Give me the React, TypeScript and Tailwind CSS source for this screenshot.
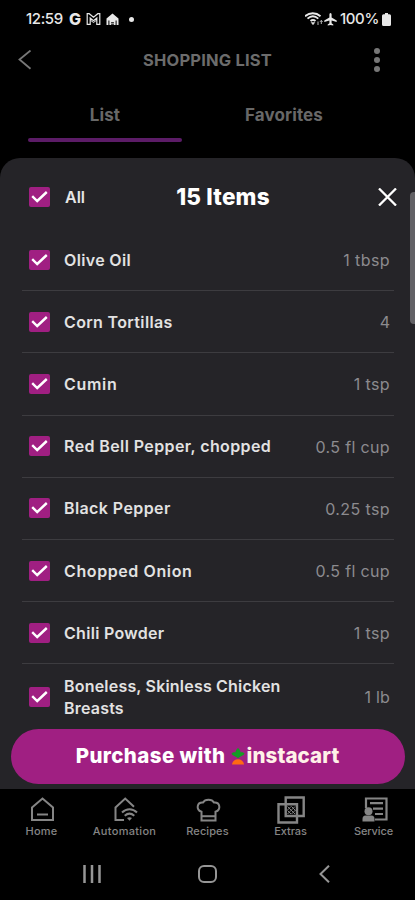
import { useState } from 'react'

interface Item {
  name: string;
  amount: string;
  nameClass: string;
  amountClass: string;
}

const ITEMS: Item[] = [
  { name: 'Olive Oil', amount: '1 tbsp', nameClass: 'tracking-[0.35px]', amountClass: 'tracking-[0.4px]' },
  { name: 'Corn Tortillas', amount: '4', nameClass: 'tracking-[0.35px]', amountClass: 'tracking-[0px]' },
  { name: 'Cumin', amount: '1 tsp', nameClass: 'tracking-[0.7px]', amountClass: 'tracking-[0.4px]' },
  { name: 'Red Bell Pepper, chopped', amount: '0.5 fl cup', nameClass: 'tracking-[0.4px]', amountClass: 'tracking-[0.35px]' },
  { name: 'Black Pepper', amount: '0.25 tsp', nameClass: 'tracking-[0.4px]', amountClass: 'tracking-[0.4px]' },
  { name: 'Chopped Onion', amount: '0.5 fl cup', nameClass: 'tracking-[0.6px]', amountClass: 'tracking-[0.35px]' },
  { name: 'Chili Powder', amount: '1 tsp', nameClass: 'tracking-[0.3px]', amountClass: 'tracking-[0.4px]' },
  { name: 'Boneless, Skinless Chicken Breasts', amount: '1 lb', nameClass: 'tracking-[0.2px]', amountClass: 'tracking-[0.2px]' },
]

function Checkbox({ checked, onClick }: { checked: boolean; onClick: () => void }) {
  return (
    <button onClick={onClick} className="flex h-[20px] w-[21px] shrink-0 items-center justify-center rounded-[2px] bg-[#a01f82]">
      {checked && (
        <svg width="17" height="14" viewBox="0 0 17 14" fill="none" stroke="#fff" strokeWidth="2.4">
          <path d="M1.2 6.2 6.2 11 15.8 2" />
        </svg>
      )}
    </button>
  )
}

function StatusBar() {
  return (
    <div className="flex h-[38px] items-center justify-between pl-[26px] pr-[24px] text-[#e8e8e8]">
      <div className="flex items-center">
        <span className="w-[38px] whitespace-nowrap text-[15px] font-medium tracking-[-0.4px]">12:59</span>
        <span className="ml-[5px] w-[13px] text-[16px] font-extrabold leading-none">G</span>
        <svg className="ml-[4px]" width="15" height="12" viewBox="0 0 15 12" fill="none" stroke="currentColor">
          <path d="M1.2.7v10.6h3V5l3.3 2.7L10.8 5v6.3h3V.7h-2L7.5 4.2 3.2.7z" strokeWidth="1.2" />
          <path d="m4.2 7 3.3 2.5L10.8 7" strokeWidth="1" />
        </svg>
        <svg className="ml-[5px]" width="13" height="13" viewBox="0 0 13 13" fill="currentColor">
          <path d="M6.5.5 12.5 5.5V12H10.6V7.5H9.6V12H7.9V9.3H5.1V12H3.4V7.5H2.4V12H.5V5.5z" />
          <path d="M4.2 7.8h4.6M5 10.8h3" stroke="currentColor" strokeWidth=".9" />
        </svg>
        <span className="ml-[10px] size-[5px] rounded-full bg-current" />
      </div>
      <div className="flex items-center">
        <svg width="18" height="14" viewBox="0 0 18 14" fill="none" stroke="currentColor" strokeWidth="1.9">
          <path d="M0 4.2C4.5.3 11 .3 15.5 4.2M2.5 6.6c3.5-3 7.300-3 10.800 0M5.500 9c1.700-1.400 3.300-1.400 5 0" />
          <path d="m6.200 10.500 1.800 2.300 1.800-2.300z" fill="currentColor" strokeWidth=".5" />
          <path d="M13 9.500v3.500M16.300 8.500V12m-1.300-2.200 1.300-1.300 1.300 1.300" strokeWidth=".8" />
        </svg>
        <svg className="ml-[1px]" width="13" height="13" viewBox="0 0 13 13" fill="currentColor">
          <path d="M6.500 0c.7 0 1.100.8 1.100 1.800V4.500L12.700 7.600V9L7.600 7.600v2.700l1.700 1.300v1L6.500 12l-2.800.6v-1l1.700-1.300V7.600L.3 9V7.600L5.400 4.500V1.800C5.400.8 5.800 0 6.500 0z" />
        </svg>
        <span className="ml-[3px] w-[42px] whitespace-nowrap text-[15px] font-medium tracking-[-0.4px]">100%</span>
        <svg width="9" height="13" viewBox="0 0 9 13" fill="currentColor">
          <path d="M3 0h3v1.200h1.500Q9 1.200 9 2.700v8.800Q9 13 7.500 13h-6Q0 13 0 11.500V2.700Q0 1.200 1.500 1.200H3z" />
        </svg>
      </div>
    </div>
  )
}

function HomeIcon() {
  return (
    <svg width="28" height="28" viewBox="0 0 28 28" fill="none" stroke="currentColor" strokeWidth="2">
      <path d="M4 11.500 14.500 2.500l10.500 9v12.500H4z" />
      <path d="M9 18.500h11" />
    </svg>
  )
}

function AutomationIcon() {
  return (
    <svg width="28" height="28" viewBox="0 0 28 28" fill="none" stroke="currentColor" strokeWidth="2">
      <path d="M13 24H4.500V11.500L14.200 2.500l8.800 8.200" />
      <path d="M11 16.500c4.500-4.300 10.500-4.300 15 0M13.700 19.700c3-2.600 6.600-2.600 9.600 0" />
      <path d="M16 22q2.500-1.600 5 0L18.500 24.800z" fill="currentColor" stroke="none" />
    </svg>
  )
}

function RecipesIcon() {
  return (
    <svg width="28" height="28" viewBox="0 0 28 28" fill="none" stroke="currentColor" strokeWidth="2">
      <path d="M7.500 24.500V15.800C1.500 13.500 3 6 9 6.500 11 2.700 18 2.700 20 6.500c6-.5 7.500 7 1.500 9.300v8.700z" />
      <path d="M7.500 20.200h14" />
    </svg>
  )
}

function ExtrasIcon() {
  return (
    <svg width="28" height="28" viewBox="0 0 28 28" fill="none" stroke="currentColor" strokeWidth="2.400">
      <path d="M8.700 1.500h18v18.500h-18zM1.500 8.200h18.500v18.300H1.500z" />
      <path d="M10.500 10.500 18 18M10.500 14.500 14 18M14.500 10.500l4 4M18 10.500 10.500 18M14 10.500l-3.500 3.500M18.500 14 14.500 18" strokeWidth="1" />
    </svg>
  )
}

function ServiceIcon() {
  return (
    <svg width="28" height="28" viewBox="0 0 28 28" fill="none" stroke="currentColor" strokeWidth="2.200">
      <path d="M6 12V2.500h20.500V23.500H15" />
      <path d="M10 7.200h13M13 12.700h10M15 18h8" />
      <circle cx="8.500" cy="15.200" r="4" fill="currentColor" stroke="none" />
      <path d="M2.500 25.500v-2.500q0-3.500 3-3.500h6q3 0 3 3.500v2.500z" fill="currentColor" stroke="none" />
    </svg>
  )
}

const NAV = [
  { label: 'Home', icon: HomeIcon, labelClass: 'tracking-[0.2px]' },
  { label: 'Automation', icon: AutomationIcon, labelClass: 'tracking-[0.3px]' },
  { label: 'Recipes', icon: RecipesIcon, labelClass: 'tracking-[0.1px]' },
  { label: 'Extras', icon: ExtrasIcon, labelClass: 'tracking-[-0.1px]' },
  { label: 'Service', icon: ServiceIcon, labelClass: 'tracking-[-0.1px]' },
]

function App() {
  const [checked, setChecked] = useState<boolean[]>(ITEMS.map(() => true))
  const allChecked = checked.every(Boolean)

  const toggle = (index: number) => {
    setChecked(checked.map((value, i) => (i === index ? !value : value)))
  }

  return (
    <div className="flex h-[900px] w-[415px] flex-col overflow-hidden bg-black font-['Inter',sans-serif]">
      <StatusBar />

      {/* Header */}
      <header className="flex h-[44px] items-center justify-between pl-[18px] pr-[32px] text-[#777]">
        <svg width="14" height="20" viewBox="0 0 14 20" fill="none" stroke="currentColor" strokeWidth="1.800">
          <path d="M12.500 .5 1.500 9.500l11 9.200" />
        </svg>
        <h1 className="ml-[12px] whitespace-nowrap text-[16.5px] font-bold tracking-[0.2px] text-[#6c6c6c]">SHOPPING LIST</h1>
        <div className="flex w-[12px] flex-col items-center gap-[3px]">
          <span className="size-[6px] rounded-full bg-current" />
          <span className="size-[6px] rounded-full bg-current" />
          <span className="size-[6px] rounded-full bg-current" />
        </div>
      </header>

      {/* Tabs */}
      <div className="flex h-[76px] px-[28px] pt-[20px] text-[17px] font-bold tracking-[0.1px] text-[#686868]">
        <div className="flex h-[40px] w-[154px] flex-col items-center justify-between">
          <span className="leading-[27px]">List</span>
          <span className="h-[4px] w-full rounded-full bg-[#5c1c67]" />
        </div>
        <div className="ml-[25px] w-[154px] text-center leading-[27px]">Favorites</div>
      </div>

      {/* Sheet */}
      <div className="relative flex h-[631px] flex-col rounded-t-[20px] bg-[#252428]">
        <div className="flex h-[71px] items-center justify-between pl-[29px] pr-[18px] pt-[6px] text-white">
          <div className="flex w-[100px] items-center">
            <Checkbox checked={allChecked} onClick={() => setChecked(ITEMS.map(() => !allChecked))} />
            <span className="ml-[15px] pt-[1px] text-[16px] font-semibold text-[#e6e6e6]">All</span>
          </div>
          <h2 className="whitespace-nowrap text-[22.5px] font-extrabold tracking-[0.2px]">15 Items</h2>
          <div className="flex w-[80px] justify-end">
            <svg width="19" height="18" viewBox="0 0 19 18" fill="none" stroke="currentColor" strokeWidth="2.300">
              <path d="m1 .5 17 17M18 .5l-17 17" />
            </svg>
          </div>
        </div>

        <div className="ml-[22px] mr-[21px] flex flex-col">
          {ITEMS.map((item, i) => (
            <div
              key={item.name}
              className="flex h-[62.2px] items-center border-b border-[#3d3c40] pl-[7px] pr-[4px] text-[16px] last:h-[65px] last:border-0"
            >
              <Checkbox checked={checked[i]} onClick={() => toggle(i)} />
              <span className="ml-[14px] w-[235px] font-semibold leading-[22px] text-[#e2e2e2]">
                <span className={item.nameClass}>{item.name}</span>
              </span>
              <span className="ml-auto whitespace-nowrap pt-[1px] text-[#8c8b8f]">
                <span className={item.amountClass}>{item.amount}</span>
              </span>
            </div>
          ))}
        </div>

        <button className="mx-auto flex h-[55px] w-[394px] shrink-0 items-center justify-center rounded-full bg-[#a01f82] text-[20.5px] font-extrabold text-white">
          <span className="whitespace-nowrap tracking-[0.4px]">Purchase with</span>
          <svg className="ml-[5px]" width="14" height="17" viewBox="0 0 14 17">
            <path d="M7 10.500C4.500 7.500 2 8.500.5 5.500 2 4 3.500 4 4.500 4.500 4.500 2 6 1 7 0 8 1 9.500 2 9.500 4.500c1-.5 2.500-.5 4 1C12 8.500 9.500 7.500 7 10.500z" fill="#139b25" />
            <path d="M1 16.500C1.500 9.500 12.500 9.500 13 16.500z" fill="#ff6a13" />
          </svg>
          <span className="ml-[2px] whitespace-nowrap tracking-[0.1px] text-[#fff1e8]">instacart</span>
        </button>

        {/* Edge panel handle */}
        <div className="absolute right-0 top-[34px] h-[132px] w-[5px] rounded-l-[4px] bg-[#626165]" />
      </div>

      {/* Bottom navigation */}
      <nav className="flex h-[59px] justify-between text-[#858585]">
        {NAV.map(({ label, icon: Icon, labelClass }) => (
          <div key={label} className="flex w-[83px] flex-col items-center pt-[7px]">
            <Icon />
            <span className="text-[11px] font-medium leading-[14px]">
              <span className={labelClass}>{label}</span>
            </span>
          </div>
        ))}
      </nav>

      {/* System buttons */}
      <div className="flex flex-1 items-center justify-between pl-[83px] pr-[85px] text-[#969696]">
        <svg width="18" height="18" viewBox="0 0 18 18" stroke="currentColor" strokeWidth="2.500">
          <path d="M1.500 0v18M9 0v18M16.500 0v18" />
        </svg>
        <svg className="mr-[5px]" width="19" height="18" viewBox="0 0 19 18" fill="none" stroke="currentColor" strokeWidth="2">
          <rect x="1" y="1" width="17" height="16" rx="5" />
        </svg>
        <svg width="11" height="18" viewBox="0 0 11 18" fill="none" stroke="currentColor" strokeWidth="2">
          <path d="M10 .7 1.500 9l8.500 8.300" />
        </svg>
      </div>
    </div>
  )
}

export default App
